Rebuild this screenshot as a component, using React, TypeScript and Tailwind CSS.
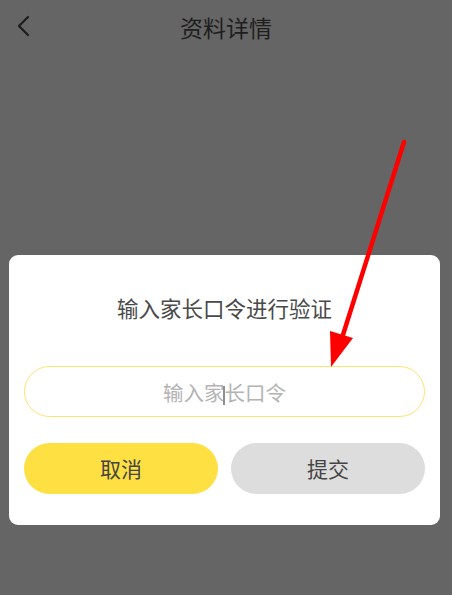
import React from 'react';

const font = { fontFamily: '"Noto Sans CJK SC", "Noto Sans", sans-serif' };

const App: React.FC = () => {
  return (
    <div className="relative w-full h-[595px] overflow-hidden bg-[#656565]" style={font}>
      {/* Header */}
      <div className="relative h-[53px] flex items-center justify-center">
        <button className="absolute left-[15px] top-[15px] p-0">
          <svg width="16" height="22" viewBox="0 0 16 22" fill="none">
            <path d="M13 2 L4 11 L13 20" stroke="#1c1c1c" strokeWidth="2.2" strokeLinecap="round" strokeLinejoin="round" />
          </svg>
        </button>
        <h1 className="text-[23px] leading-[30px] text-[#1e1e1e] font-normal">资料详情</h1>
      </div>

      {/* Dialog */}
      <div className="absolute inset-0 pt-[255px] pl-[9px] pr-[12px]">
        <div className="bg-white rounded-[9px] pt-[38px] pb-[31px] px-[15px] flex flex-col">
          <p className="text-center text-[21.5px] leading-[30px] text-[#4a4a4a]">输入家长口令进行验证</p>

          <div className="relative mt-[43px] h-[51px] rounded-full border border-[#ffe370] flex items-center justify-center">
            <span className="text-[20.5px] leading-[30px] text-[#b3b3b3]">输入家长口令</span>
            <span className="absolute left-[198px] top-[19px] w-[1.5px] h-[19px] bg-[#8f8f8f]" />
          </div>

          <div className="mt-[26px] flex gap-[13px]">
            <button className="flex-1 h-[51px] rounded-full bg-[#ffe043] text-[21px] text-[#444444]">取消</button>
            <button className="flex-1 h-[51px] rounded-full bg-[#dddddd] text-[21px] text-[#444444]">提交</button>
          </div>
        </div>
      </div>

      {/* Annotation arrow */}
      <svg className="absolute inset-0 pointer-events-none" width="452" height="595" viewBox="0 0 452 595">
        <line x1="404" y1="142" x2="342" y2="338" stroke="#ff0000" strokeWidth="4.5" strokeLinecap="round" />
        <polygon points="331,367 330,331 353,338" fill="#ff0000" />
      </svg>
    </div>
  );
};

export default App;
